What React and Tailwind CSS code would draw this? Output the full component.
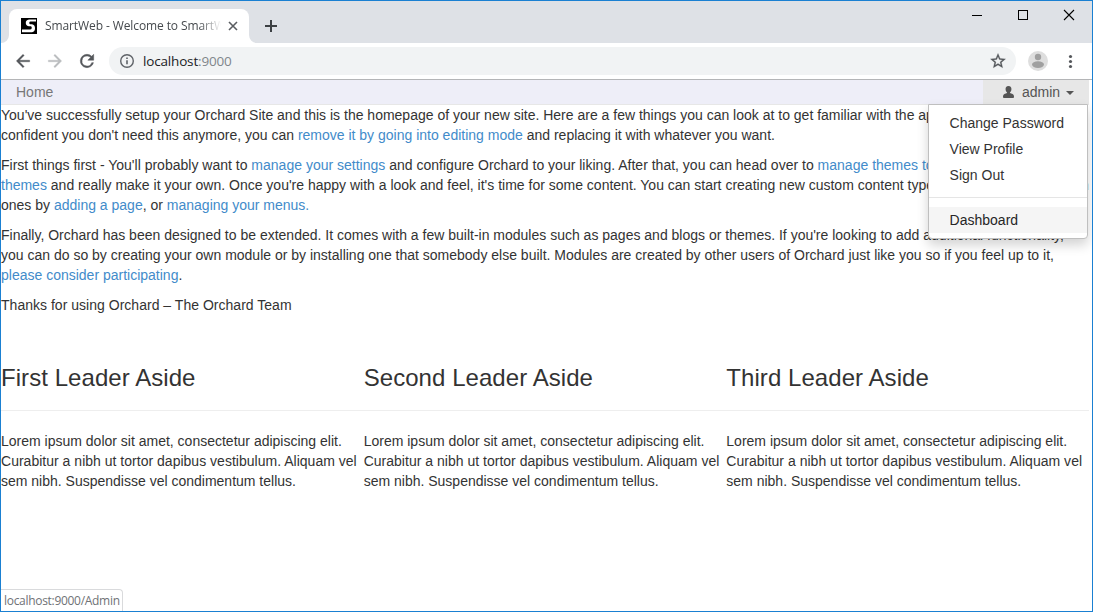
const Line = ({ children, className = '' }) => (
  <span className={`block whitespace-nowrap ${className}`}>{children}</span>
);

const Link = ({ children }) => <a className="text-[#428bca]">{children}</a>;

const leaders = ['First Leader Aside', 'Second Leader Aside', 'Third Leader Aside'];

function TabStrip() {
  return (
    <div className="flex h-[42px] shrink-0 bg-[#dee1e6]">
      <div className="flex w-2 items-end">
        <svg width="8" height="8" viewBox="0 0 8 8"><path d="M8 0V8H0A8 8 0 0 0 8 0Z" fill="#fff" /></svg>
      </div>
      <div className="mt-2 flex h-[34px] w-60 items-center rounded-t-lg bg-white pl-3">
        <svg width="16" height="16" viewBox="0 0 16 16" className="shrink-0">
          <rect width="16" height="16" fill="#000" />
          <path d="M15 1.500H8Q4.500 2 4.800 5.200Q5 7.800 8 8.200H10Q11 8.600 10.700 10.200Q10.500 11.500 9 11.600H1V14.200H11Q14 13.500 14 10.200Q14 6.800 11 6.200H9Q8 5.800 8.300 4.500Q8.500 3.700 9.500 3.600H15Z" fill="#fff" />
        </svg>
        <div className="ml-2 w-[176px] overflow-hidden whitespace-nowrap font-['Open_Sans',sans-serif] text-[12px] tracking-[-0.1px] text-[#45494d] [mask-image:linear-gradient(to_right,black_154px,transparent_176px)]">
          SmartWeb - Welcome to SmartW
        </div>
        <svg width="10" height="10" viewBox="0 0 10 10" className="ml-[7px]" stroke="#5a5d61" strokeWidth="1.600"><path d="M1 1L9 9M9 1L1 9" /></svg>
      </div>
      <div className="flex w-2 items-end">
        <svg width="8" height="8" viewBox="0 0 8 8"><path d="M0 0V8H8A8 8 0 0 1 0 0Z" fill="#fff" /></svg>
      </div>
      <svg width="12" height="12" viewBox="0 0 12 12" className="ml-2 mt-[19px]" stroke="#3c4043" strokeWidth="2"><path d="M6 0V12M0 6H12" /></svg>
      <svg width="112" height="12" viewBox="0 0 112 12" className="ml-auto mr-[16px] mt-2" fill="none" stroke="#000">
        <path d="M8 6.500H18" />
        <rect x="54.500" y="1.500" width="9" height="9" />
        <path d="M100 1L110 11M110 1L100 11" strokeWidth="1.100" />
      </svg>
    </div>
  );
}

function Toolbar() {
  return (
    <div className="flex h-[37px] shrink-0 items-center border-b border-[#b4b5b7] bg-white">
      <svg width="20" height="20" viewBox="0 0 24 24" className="ml-3 shrink-0" fill="#54575b" stroke="#54575b" strokeWidth=".4"><path d="M20 11H7.830l5.590-5.590L12 4l-8 8 8 8 1.410-1.410L7.830 13H20v-2z" /></svg>
      <svg width="20" height="20" viewBox="0 0 24 24" className="ml-3 shrink-0" fill="#babcbe" stroke="#babcbe" strokeWidth=".4"><path d="M12 4l-1.410 1.410L16.170 11H4v2h12.170l-5.580 5.590L12 20l8-8z" /></svg>
      <svg width="20" height="20" viewBox="0 0 24 24" className="ml-3 shrink-0" fill="#54575b"><path d="M17.650 6.350A7.950 7.950 0 0 0 12 4a8 8 0 1 0 7.730 10h-2.080A6 6 0 1 1 12 6c1.660 0 3.140.690 4.220 1.780L13 11h7V4l-2.350 2.350z" stroke="#54575b" strokeWidth=".6" /></svg>
      <div className="ml-3 flex h-7 w-[907px] shrink-0 items-center rounded-full bg-[#f1f3f4]">
        <svg width="16" height="16" viewBox="0 0 16 16" className="ml-[10px]" fill="none" stroke="#5f6368"><circle cx="8" cy="8" r="6.300" strokeWidth="1.400" /><path d="M8 7.200V11.300M8 4.500V6" strokeWidth="1.600" /></svg>
        <span className="ml-2 mt-0.5 font-['Open_Sans',sans-serif] text-[13.500px] tracking-[-0.17px] text-[#202124]">localhost<span className="text-[#80868b]">:9000</span></span>
        <svg width="18" height="18" viewBox="0 0 24 24" className="ml-auto mr-[9px]" fill="#54575b" stroke="#54575b" strokeWidth=".4"><path d="M22 9.240l-7.190-.620L12 2 9.190 8.630 2 9.240l5.460 4.730L5.820 21 12 17.270 18.180 21l-1.630-7.030L22 9.240zM12 15.400l-3.760 2.270 1-4.280-3.320-2.880 4.380-.380L12 6.100l1.710 4.040 4.380.380-3.320 2.880 1 4.280L12 15.400z" /></svg>
      </div>
      <svg width="20" height="20" viewBox="0 0 20 20" className="ml-3 shrink-0"><circle cx="10" cy="10" r="10" fill="#dedede" /><g fill="#a0a0a0"><circle cx="10" cy="6" r="3.200" /><ellipse cx="10" cy="13.600" rx="6" ry="3.300" /></g></svg>
      <svg width="5" height="15" viewBox="0 0 5 15" className="ml-5 mt-px" fill="#54575b"><circle cx="2.500" cy="2.500" r="1.600" /><circle cx="2.500" cy="7.500" r="1.600" /><circle cx="2.500" cy="12.500" r="1.600" /></svg>
    </div>
  );
}

function UserMenu() {
  return (
    <div className="absolute right-px top-6 z-10 w-40 rounded-b border border-[#bfbfbf] bg-white py-[5px] leading-5 text-[#333] shadow-[0_6px_12px_rgba(0,0,0,0.175)]">
      <div className="pl-[20.6px] py-[3px]">Change Password</div>
      <div className="pl-[20.6px] py-[3px]">View Profile</div>
      <div className="pl-[20.6px] py-[3px]">Sign Out</div>
      <div className="my-[9px] h-px bg-[#e5e5e5]" />
      <div className="bg-[#f5f5f5] py-[3px] pl-[20.6px] text-[#262626]">Dashboard</div>
    </div>
  );
}

export default function App() {
  return (
    <div className="relative flex h-[612px] w-[1093px] flex-col overflow-hidden border border-[#1a80d2] bg-white font-['Liberation_Sans',Arial,sans-serif] text-sm text-[#333]">
      <TabStrip />
      <Toolbar />
      <div className="w-[1088px] leading-5">
        <nav className="relative flex h-[25px] justify-between border-b border-[#e7e7e7] bg-[#eeeef8] text-[#777]">
          <span className="pl-[15px] pt-0.5">Home</span>
          <div className="flex w-[106px] bg-[#e7e7e7] pl-5 pt-0.5 text-[#555]">
            <svg width="11" height="12" viewBox="0 0 12 12" preserveAspectRatio="none" className="mt-1" fill="#555"><path d="M6 0C8.400 0 9.300 1.300 9.200 3.300C9.100 5 8.300 5.900 7.600 6.400V7L10.500 7.900Q12 8.600 12 10.500V11Q12 12 11 12H1Q0 12 0 11V10.500Q0 8.600 1.500 7.900L4.400 7V6.400C3.700 5.900 2.900 5 2.800 3.300C2.700 1.300 3.600 0 6 0Z" /></svg>
            <span className="ml-2">admin</span>
            <svg width="8" height="4" viewBox="0 0 8 4" className="ml-1.5 mt-[9px]" fill="#555"><path d="M0 0H8L4 4Z" /></svg>
          </div>
          <UserMenu />
        </nav>
        <main>
          <div className="space-y-2.5">
            <p>
              <Line>You've successfully setup your Orchard Site and this is the homepage of your new site. Here are a few things you can look at to get familiar with the application. Once you feel</Line>
              <Line>confident you don't need this anymore, you can <Link>remove it by going into editing mode</Link> and replacing it with whatever you want.</Line>
            </p>
            <p>
              <Line className="tracking-[0.005px]">First things first - You'll probably want to <Link>manage your settings</Link> and configure Orchard to your liking. After that, you can head over to <Link>manage themes to change or install new</Link></Line>
              <Line><Link>themes</Link> and really make it your own. Once you're happy with a look and feel, it's time for some content. You can start creating new custom content types or start from the built-in</Line>
              <Line>ones by <Link>adding a page</Link>, or <Link>managing your menus.</Link></Line>
            </p>
            <p>
              <Line>Finally, Orchard has been designed to be extended. It comes with a few built-in modules such as pages and blogs or themes. If you're looking to add additional functionality,</Line>
              <Line>you can do so by creating your own module or by installing one that somebody else built. Modules are created by other users of Orchard just like you so if you feel up to it,</Line>
              <Line><Link>please consider participating</Link>.</Line>
            </p>
            <p className="tracking-[0.02px]">Thanks for using Orchard – The Orchard Team</p>
          </div>
          <div className="mt-[50px] grid grid-cols-3">
            {leaders.map((title) => (
              <section key={title}>
                <h3 className="text-2xl leading-[26px] tracking-[0.06px]">{title}</h3>
                <div className="mb-5 mt-[19px] h-px bg-[#eee]" />
                <p>
                  <Line>Lorem ipsum dolor sit amet, consectetur adipiscing elit.</Line>
                  <Line className="tracking-[0.015px]">Curabitur a nibh ut tortor dapibus vestibulum. Aliquam vel</Line>
                  <Line>sem nibh. Suspendisse vel condimentum tellus.</Line>
                </p>
              </section>
            ))}
          </div>
        </main>
      </div>
      <div className="absolute bottom-0 left-0 h-[22px] w-[122px] whitespace-nowrap rounded-tr border-r border-t border-[#d9dadc] bg-white pl-[3px] pt-0.5 font-['Open_Sans',sans-serif] text-[12px] leading-[18px] tracking-[-0.3px] text-[#6f7276]">localhost:9000/Admin</div>
    </div>
  );
}
